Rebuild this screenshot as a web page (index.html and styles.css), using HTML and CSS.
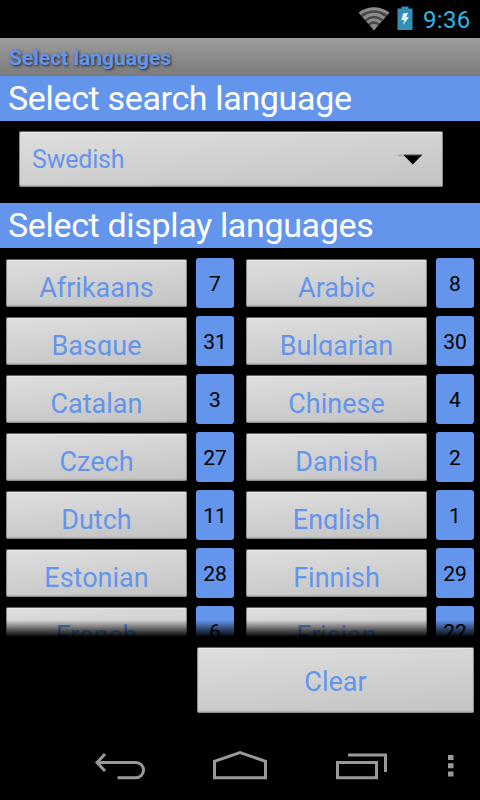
FILE: index.html
```html
<!DOCTYPE html>
<html lang="en">
<head>
    <meta charset="UTF-8">
    <meta name="viewport" content="width=device-width, initial-scale=1.0">
    <title>Select languages</title>
    <link rel="stylesheet" href="styles.css">
</head>
<body>
    <div class="status-bar">
        <svg class="wifi" width="32" height="24" viewBox="0 0 32 24">
            <path d="M16 23.5 L0.8 6.2 Q16 -4.6 31.2 6.2 Z" fill="#484848"/>
            <g fill="none" stroke="#8c8c8c" stroke-width="3">
                <path d="M1.6 6.6 Q16 -3 30.4 6.6"/>
                <path d="M5.6 11.2 Q16 3.2 26.4 11.2"/>
                <path d="M9.4 15.4 Q16 10 22.6 15.4"/>
            </g>
            <path d="M12 18.3 Q16 15.6 20 18.3 L16 23.5 Z" fill="#8c8c8c"/>
        </svg>
        <svg class="battery" width="16" height="24" viewBox="0 0 16 24">
            <path d="M0.5 1.5 H4.5 V-0.5 H11.5 V1.5 H15.5 V23 H0.5 Z" fill="#338fb5"/>
            <path d="M6.2 6.5 L11 5.7 L9.4 10.1 L12 10.3 L6 18.1 L7.2 12.9 L4.2 12.9 Z" fill="#e4f1f6"/>
        </svg>
        <span class="clock">9:36</span>
    </div>
    <div class="title-bar"><span>Select languages</span></div>

    <h2 class="section">Select search language</h2>
    <div class="spinner-row">
        <button class="button spinner">
            <span>Swedish</span>
            <svg width="25" height="11" viewBox="0 0 25 11">
                <path d="M0 0.5 H24 V2.5 H0 Z" fill="#aaa"/>
                <path d="M6 0.5 H24 V2 H6 Z" fill="#555"/>
                <path d="M6 1.5 H23.5 L14.8 10.5 Z" fill="#000"/>
            </svg>
        </button>
    </div>

    <h2 class="section">Select display languages</h2>
    <div class="languages" id="languages"></div>

    <div class="actions">
        <button class="button clear">Clear</button>
    </div>

    <div class="nav-bar">
        <svg width="480" height="72" viewBox="0 0 480 72" fill="none" stroke="#999" stroke-width="3">
            <path d="M97 34.5 H136 A7.6 7.6 0 0 1 136 49.7 H117.5"/>
            <path d="M105 26 L97 34.5 L105 43"/>
            <path d="M214.5 49.7 V33.3 L240 24.5 L265.5 33.3 V49.7 Z"/>
            <path d="M337.5 34.5 H376.5 V49.7 H337.5 Z"/>
            <path d="M348 27 H385.5 V44"/>
            <path d="M448 29.5 H453.5 M448 37.7 H453.5 M448 45.9 H453.5" stroke-width="5"/>
        </svg>
    </div>

    <script>
        const languages = [
            ['Afrikaans', 7], ['Arabic', 8],
            ['Basque', 31], ['Bulgarian', 30],
            ['Catalan', 3], ['Chinese', 4],
            ['Czech', 27], ['Danish', 2],
            ['Dutch', 11], ['English', 1],
            ['Estonian', 28], ['Finnish', 29],
            ['French', 6], ['Frisian', 22]
        ];
        const list = document.getElementById('languages');

        languages.forEach(([name, order]) => {
            const item = document.createElement('div');
            item.className = 'language';

            const button = document.createElement('button');
            button.className = 'button toggle';
            const label = document.createElement('span');
            label.textContent = name;
            button.appendChild(label);

            const badge = document.createElement('span');
            badge.className = 'badge';
            badge.textContent = order;

            item.append(button, badge);
            list.appendChild(item);
        });
    </script>
</body>
</html>
```
FILE: styles.css
```css
* {
    box-sizing: border-box;
}
body {
    margin: 0;
    width: 480px;
    height: 800px;
    overflow: hidden;
    display: flex;
    flex-direction: column;
    background-color: #000;
    color: #6495ed;
    font-family: Roboto, sans-serif;
}
.status-bar {
    height: 38px;
    display: flex;
    justify-content: flex-end;
    align-items: center;
    padding-right: 9px;
}
.wifi {
    margin-right: 7px;
}
.battery {
    margin-right: 10px;
    overflow: visible;
}
.clock {
    width: 48px;
    padding-top: 2px;
    color: #33b5e5;
    font-size: 24px;
    letter-spacing: 0.3px;
    line-height: 36px;
    white-space: nowrap;
}
.title-bar {
    height: 38px;
    padding-left: 9px;
    background: linear-gradient(#9c9c9c, #7b7b7b);
    font-size: 21px;
    font-weight: bold;
    line-height: 41px;
    text-shadow: 1px 1px 3px #222;
}
.section {
    height: 45px;
    margin: 0;
    padding-left: 8px;
    background-color: #6495ed;
    color: #fff;
    font-size: 34px;
    font-weight: normal;
    letter-spacing: -0.34px;
    line-height: 45px;
    white-space: nowrap;
}
.button {
    margin: 0;
    padding: 0;
    border: 1px solid #8c8c8c;
    border-top-color: #666;
    border-radius: 2px;
    background: linear-gradient(175deg, #dedede, #c3c3c3);
    box-shadow: inset 0 1px 1px #e8e8e8, inset 0 -1px 1px #b0b0b0;
    color: inherit;
    font-family: inherit;
    font-size: 27px;
}
.spinner-row {
    height: 82px;
    padding: 10px 37px 0 19px;
}
.spinner {
    width: 424px;
    height: 56px;
    display: flex;
    justify-content: space-between;
    align-items: center;
    padding: 0 19px 0 12px;
    font-size: 25px;
    letter-spacing: -0.2px;
}
.languages {
    position: relative;
    height: 389px;
    padding: 10px 6px 0;
    display: grid;
    grid-template-columns: 228px 228px;
    grid-auto-rows: 50px;
    gap: 8px 12px;
    overflow: hidden;
}
/* Fading edge at the bottom of the scrolling list */
.languages::after {
    content: "";
    position: absolute;
    left: 0;
    right: 0;
    bottom: 0;
    height: 17px;
    background: linear-gradient(transparent, #000);
}
.language {
    display: flex;
    justify-content: space-between;
}
.toggle {
    width: 181px;
    height: 48px;
    margin-top: 1px;
    display: flex;
    justify-content: center;
}
/* The label is cut off at the button's padding, descenders included */
.toggle span {
    height: 38px;
    padding-top: 12px;
    line-height: 32px;
    overflow: hidden;
}
.badge {
    width: 38px;
    height: 50px;
    border-radius: 3px;
    background-color: #6495ed;
    color: #000;
    font-size: 21px;
    line-height: 53px;
    text-align: center;
}
.actions {
    height: 91px;
    padding: 10px 6px 0;
    display: flex;
    justify-content: flex-end;
}
.clear {
    width: 277px;
    height: 66px;
    padding-top: 4px;
}
.nav-bar {
    height: 72px;
}
```
